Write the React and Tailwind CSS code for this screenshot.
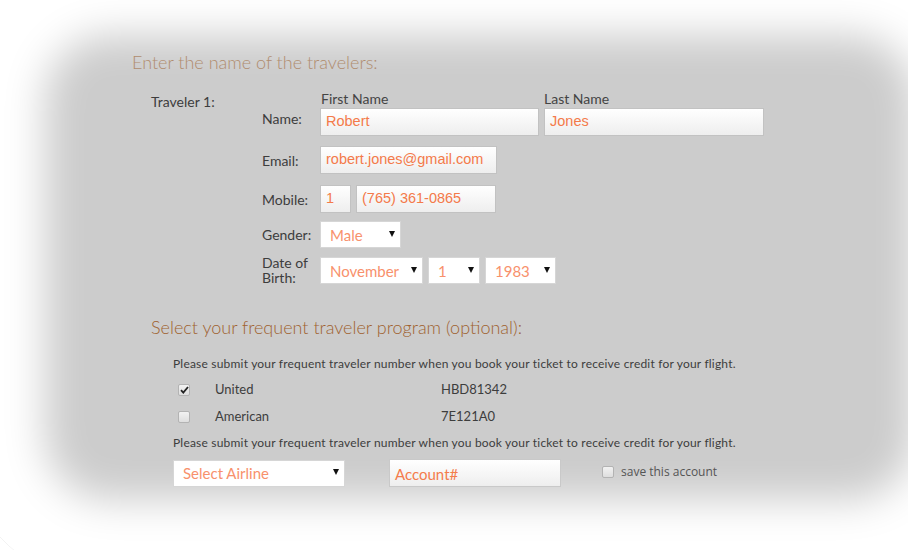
import React from "react";

const labelFont = { fontFamily: "Lato, 'Open Sans', sans-serif" };
const inputFont = { fontFamily: "'Liberation Sans', Arial, sans-serif" };

function TextBox({ value, width, className = "" }) {
  return (
    <div
      className={`flex h-[28px] items-center border border-[#c2c2c2] bg-gradient-to-b from-white to-[#eeeeee] px-[5px] text-[14.5px] text-[#f47a4a] ${width} ${className}`}
      style={inputFont}
    >
      {value}
    </div>
  );
}

function Caret() {
  return (
    <svg width="6" height="6" viewBox="0 0 6 6" className="shrink-0">
      <path d="M0 0 H6 L3 6 Z" fill="#111" />
    </svg>
  );
}

function SelectBox({ value, width, className = "" }) {
  return (
    <div
      className={`flex h-[27px] items-center justify-between border border-[#d6d6d6] bg-white pl-[9px] pr-[5px] text-[15px] text-[#f8916c] ${width} ${className}`}
      style={labelFont}
    >
      <span className="mt-[1px]">{value}</span>
      <div className="-mt-[2px]">
        <Caret />
      </div>
    </div>
  );
}

function Checkbox({ checked }) {
  return (
    <div className="flex h-[12px] w-[12px] items-center justify-center rounded-[2px] border border-[#b3b3b3] bg-gradient-to-b from-[#f2f2f2] to-[#dedede]">
      {checked && (
        <svg width="9" height="8" viewBox="0 0 9 8">
          <path d="M1 4.2 L3.3 6.6 L8 1" stroke="#222" strokeWidth="1.8" fill="none" />
        </svg>
      )}
    </div>
  );
}

function Row({ label, children, className = "", labelClass = "" }) {
  return (
    <div className={`flex items-center ${className}`}>
      <div className={`w-[58px] text-[14px] text-[#3d3d3d] ${labelClass}`} style={labelFont}>
        {label}
      </div>
      <div className="flex gap-[5px]">{children}</div>
    </div>
  );
}

export default function App() {
  const note = "Please submit your frequent traveler number when you book your ticket to receive credit for your flight.";

  return (
    <div className="h-[550px] w-[908px] overflow-hidden bg-white">
      <div className="-ml-[40px] -mt-[50px] h-[635px] w-[1040px] rounded-[150px] bg-[#cccccc] pt-[100px] shadow-[inset_0_0_40px_85px_#ffffff]">
        <h1 className="ml-[172px] text-[18px] font-light leading-[24px] text-[#b08c6e]" style={labelFont}>
          Enter the name of the travelers:
        </h1>

        <div className="ml-[191px] mt-[16px] flex">
          <div className="mt-[3px] w-[111px] text-[14px] leading-[18px] text-[#3d3d3d]" style={labelFont}>
            Traveler 1:
          </div>
          <div className="flex flex-col">
            <div className="ml-[58px] flex gap-[5px] text-[14px] leading-[18px] text-[#444]" style={labelFont}>
              <span className="w-[219px] pl-[1px]">First Name</span>
              <span>Last Name</span>
            </div>
            <Row label="Name:" labelClass="-mt-[8px]">
              <TextBox value="Robert" width="w-[219px]" />
              <TextBox value="Jones" width="w-[220px]" />
            </Row>
            <Row label="Email:" className="mt-[10px]">
              <TextBox value="robert.jones@gmail.com" width="w-[177px]" />
            </Row>
            <Row label="Mobile:" className="mt-[11px]">
              <TextBox value="1" width="w-[31px]" />
              <TextBox value="(765) 361-0865" width="w-[140px]" />
            </Row>
            <Row label="Gender:" className="mt-[8px]">
              <SelectBox value="Male" width="w-[81px]" />
            </Row>
            <Row label={<>Date of<br />Birth:</>} className="mt-[9px] h-[27px]" labelClass="-mt-[1px] leading-[15px]">
              <SelectBox value="November" width="w-[103px]" />
              <SelectBox value="1" width="w-[52px]" />
              <SelectBox value="1983" width="w-[71px]" />
            </Row>
          </div>
        </div>

        <h2 className="ml-[191px] mt-[31px] text-[18px] font-light leading-[24px] text-[#a0622f]" style={labelFont}>
          Select your frequent traveler program (optional):
        </h2>

        <div className="ml-[213px] mt-[16px] text-[12px] text-[#3d3d3d]" style={labelFont}>
          <p className="leading-[18px] tracking-[0.2px]">{note}</p>
          <div className="mt-[8px] flex h-[18px] items-center text-[13px]">
            <div className="ml-[5px] w-[37px]">
              <Checkbox checked />
            </div>
            <span className="w-[226px]">United</span>
            <span>HBD81342</span>
          </div>
          <div className="mt-[9px] flex h-[18px] items-center text-[13px]">
            <div className="ml-[5px] w-[37px]">
              <Checkbox />
            </div>
            <span className="w-[226px]">American</span>
            <span>7E121A0</span>
          </div>
          <p className="mt-[8px] leading-[18px] tracking-[0.2px]">{note}</p>

          <div className="mt-[7px] flex items-center">
            <SelectBox value="Select Airline" width="w-[172px]" />
            <div
              className="ml-[44px] flex h-[28px] w-[172px] items-start border border-[#c9c9c9] bg-gradient-to-b from-white to-[#eeeeee] px-[5px] pt-[3px] text-[15px] text-[#f47c4c]"
              style={labelFont}
            >
              Account#
            </div>
            <div className="ml-[41px] -mt-[2px] flex items-center gap-[7px]">
              <Checkbox />
              <span className="text-[12px] text-[#555]" style={{ fontFamily: "'Open Sans', sans-serif" }}>
                save this account
              </span>
            </div>
          </div>
        </div>
      </div>
    </div>
  );
}
